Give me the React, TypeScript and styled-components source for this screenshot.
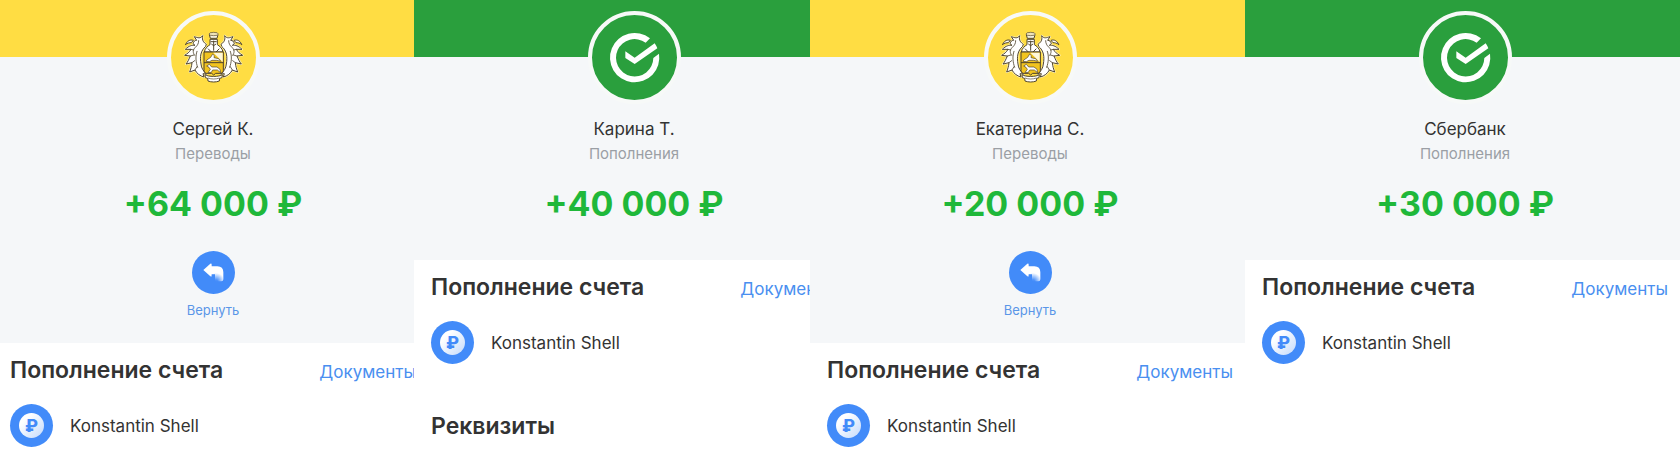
import React from "react";
import styled, { createGlobalStyle } from "styled-components";

const GlobalStyle = createGlobalStyle`
  *, *::before, *::after { box-sizing: border-box; }
  body {
    margin: 0;
    background: #ffffff;
    color: #333333;
    font-family: Inter, "Liberation Sans", sans-serif;
  }
`;

type Bank = "tinkoff" | "sber";

const bankColor: Record<Bank, string> = {
  tinkoff: "#ffdd43",
  sber: "#2a9f3d",
};

const Board = styled.main`
  display: grid;
  grid-template-columns: 414fr 396fr 435fr 435fr;
  min-height: 100vh;
`;

const Column = styled.article`
  min-width: 0;
  overflow: hidden;
`;

const Screen = styled.div<{ $shift: number }>`
  min-width: 440px;
  margin-left: ${(p) => -p.$shift}px;
`;

const Hero = styled.header<{ $tall: boolean }>`
  display: flex;
  flex-direction: column;
  align-items: center;
  padding-bottom: ${(p) => (p.$tall ? 25 : 34)}px;
  background: #f5f7f9;
`;

const Banner = styled.div<{ $bank: Bank }>`
  align-self: stretch;
  height: 57px;
  background: ${(p) => bankColor[p.$bank]};
`;

const Avatar = styled.div<{ $bank: Bank }>`
  width: 93px;
  height: 93px;
  margin-top: -46px;
  border: 4px solid #f7f9f8;
  border-radius: 50%;
  background: ${(p) => bankColor[p.$bank]};

  svg {
    display: block;
    width: 100%;
    height: 100%;
  }
`;

const Name = styled.h1`
  margin: 13px 0 0;
  font-size: 17px;
  font-weight: 400;
  line-height: 24px;
`;

const Category = styled.p`
  margin: 0;
  color: #9b9fa5;
  font-size: 15px;
  line-height: 26px;
`;

const Amount = styled.p`
  margin: 15px 0 0;
  color: #1fb83a;
  font-size: 34px;
  font-weight: 700;
  line-height: 44px;
`;

const ReturnButton = styled.button`
  display: flex;
  flex-direction: column;
  align-items: center;
  gap: 8px;
  margin-top: 25px;
  padding: 0;
  border: 0;
  background: none;
  color: #5a96e8;
  font: inherit;
  font-size: 13px;
  line-height: 16px;
  cursor: pointer;
`;

const Section = styled.section`
  padding: 13px 17px 0;
`;

const SectionHead = styled.div`
  display: flex;
  align-items: baseline;
  justify-content: space-between;
`;

const Title = styled.h2`
  margin: 0;
  font-size: 23px;
  font-weight: 600;
  line-height: 28px;
`;

const DocsLink = styled.a`
  color: #4a8ff0;
  font-size: 17px;
  line-height: 24px;
  text-decoration: none;
`;

const Account = styled.div`
  display: flex;
  align-items: center;
  gap: 17px;
  margin-top: 20px;
  font-size: 17px;
  line-height: 24px;
`;

const Coin = styled.span`
  display: grid;
  place-items: center;
  width: 43px;
  height: 43px;
  border-radius: 50%;
  background: #428bf9;
`;

const CoinFace = styled.span`
  display: grid;
  place-items: center;
  width: 25px;
  height: 25px;
  border-radius: 50%;
  background: linear-gradient(135deg, #ffffff 25%, #c3dafb 100%);
  color: #428bf9;
  font-size: 17px;
  font-weight: 800;
  line-height: 24px;
`;

const Details = styled.section`
  padding: 48px 17px 0;
`;

function Crest() {
  const leaf =
    "M124 108 C118 104 111 98 114 83 C107 93 99 89 89 86 L96 97 C90 97 87 100 85 107 L91 112 C82 111 73 113 62 124 L79 124 C74 133 68 137 60 142 L77 144 C73 153 70 161 64 168 L82 164 C81 175 78 184 75 192 L91 186 C96 196 106 204 118 207 L115 197 L126 198 C116 190 110 180 109 168 C105 146 108 128 122 116 Z";
  const half = (
    <g strokeLinejoin="round" strokeLinecap="round">
      <path d={leaf} fill="#fff" stroke="#fff3bd" strokeWidth="6" />
      <path d={leaf} fill="#fff" stroke="#51462f" strokeWidth="3" />
      <path d="M63 109 C68 98 76 94 86 97 L80 104 C75 104 69 105 63 109 Z" fill="#fff" stroke="#51462f" strokeWidth="3" />
      <path
        d="M102 98 C102 106 99 112 92 118 C84 126 84 134 90 142 M79 124 L87 126 M77 144 L88 141 M97 130 C92 144 93 162 99 178 M82 164 L90 158 M91 186 L97 176"
        fill="none"
        stroke="#51462f"
        strokeWidth="2.500"
      />
    </g>
  );
  return (
    <svg viewBox="19 21 255 255" aria-hidden="true">
      {half}
      <g transform="translate(294 0) scale(-1 1)">{half}</g>
      <path
        d="M121 200 C130 207 164 207 173 200 L172 209 L165 211 L164 219 C154 223 140 223 130 219 L129 211 L122 209 Z"
        fill="#fff"
        stroke="#51462f"
        strokeWidth="3"
      />
      <path d="M130 210 C140 214 154 214 164 210" fill="none" stroke="#51462f" strokeWidth="2" />
      <path
        d="M119 132 C121 120 130 114 136 110 L136 94 L158 94 L158 110 C164 114 173 120 175 132 Z"
        fill="#ffffff"
        stroke="#51462f"
        strokeWidth="3"
      />
      <path
        d="M147 98 V128 M138 101 H156 M140 108 L147 113 L154 108 M130 122 L140 132 M164 122 L154 132"
        fill="none"
        stroke="#51462f"
        strokeWidth="3"
      />
      <path d="M134 80 C137 75 157 75 160 80 L157 91 H137 Z" fill="#f8f3e0" stroke="#51462f" strokeWidth="3" />
      <ellipse cx="147" cy="78" rx="14" ry="5" fill="#f0e4b8" stroke="#51462f" strokeWidth="2" />
      <path
        d="M118 132 H176 V188 Q176 195 169 196 L153 196 L147 201 L141 196 L125 196 Q118 195 118 188 Z"
        fill="#f2c41f"
        stroke="#4b3f2d"
        strokeWidth="3"
      />
      <path d="M146 134 H174 V162 L160 148 Z" fill="#fff8dc" />
      <path d="M118 164 H176" stroke="#4b3f2d" strokeWidth="3" />
      <path
        d="M124 160 C126 154 134 152 138 148 L144 138 L149 143 L148 149 L162 152 L168 160 L156 157 L142 157 L134 161 Z"
        fill="#fff"
        stroke="#4b3f2d"
        strokeWidth="2"
      />
      <path
        d="M126 174 L134 169 L141 177 L157 177 L166 184 L168 194 L158 186 L144 186 L140 193 L130 194 L137 184 L133 178 Z"
        fill="#fff"
        stroke="#4b3f2d"
        strokeWidth="2"
      />
    </svg>
  );
}

function CheckMark() {
  return (
    <svg viewBox="1 1 255 255" fill="#ffffff" aria-hidden="true">
      <path d="M175 71 A74 74 0 1 0 202 117 L185 130 A56 56 0 1 1 162 84 Z" />
      <path d="M101 110 L129 129 L189 86 A74 74 0 0 1 197 101 L129 148 L101 130 Z" />
    </svg>
  );
}

function ReturnIcon({ id }: { id: string }) {
  return (
    <svg width="43" height="43" viewBox="0 0 129 129" aria-hidden="true">
      <defs>
        <radialGradient id={id} gradientUnits="userSpaceOnUse" cx="72" cy="92" r="26">
          <stop offset="0.200" stopColor="#ffffff" stopOpacity="0.050" />
          <stop offset="1" stopColor="#ffffff" />
        </radialGradient>
      </defs>
      <circle cx="64.500" cy="64.500" r="64.500" fill="#428bf9" />
      <path
        d="M34 57 L55 38 Q59 36 59 41 V46 H76 Q94 46 94 64 V85 Q94 91 88 91 H74 Q69 91 69 86 V70 H59 V74 Q59 79 55 76 Z"
        fill={`url(#${id})`}
      />
    </svg>
  );
}

interface Operation {
  id: string;
  bank: Bank;
  name: string;
  category: string;
  amount: string;
  returnable: boolean;
  details?: boolean;
  shift: number;
}

const operations: Operation[] = [
  { id: "sergey", bank: "tinkoff", name: "Сергей К.", category: "Переводы", amount: "+64 000 ₽", returnable: true, shift: 7 },
  { id: "karina", bank: "sber", name: "Карина Т.", category: "Пополнения", amount: "+40 000 ₽", returnable: false, details: true, shift: 0 },
  { id: "ekaterina", bank: "tinkoff", name: "Екатерина С.", category: "Переводы", amount: "+20 000 ₽", returnable: true, shift: 0 },
  { id: "sberbank", bank: "sber", name: "Сбербанк", category: "Пополнения", amount: "+30 000 ₽", returnable: false, shift: 0 },
];

function OperationScreen({ op }: { op: Operation }) {
  return (
    <Column>
      <Screen $shift={op.shift}>
        <Hero $tall={op.returnable}>
          <Banner $bank={op.bank} />
          <Avatar $bank={op.bank}>{op.bank === "tinkoff" ? <Crest /> : <CheckMark />}</Avatar>
          <Name>{op.name}</Name>
          <Category>{op.category}</Category>
          <Amount>{op.amount}</Amount>
          {op.returnable && (
            <ReturnButton type="button">
              <ReturnIcon id={`fade-${op.id}`} />
              Вернуть
            </ReturnButton>
          )}
        </Hero>
        <Section>
          <SectionHead>
            <Title>Пополнение счета</Title>
            <DocsLink href="#documents">Документы</DocsLink>
          </SectionHead>
          <Account>
            <Coin>
              <CoinFace>₽</CoinFace>
            </Coin>
            Konstantin Shell
          </Account>
        </Section>
        {op.details && (
          <Details>
            <Title>Реквизиты</Title>
          </Details>
        )}
      </Screen>
    </Column>
  );
}

export default function App() {
  return (
    <>
      <GlobalStyle />
      <Board>
        {operations.map((op) => (
          <OperationScreen key={op.id} op={op} />
        ))}
      </Board>
    </>
  );
}
